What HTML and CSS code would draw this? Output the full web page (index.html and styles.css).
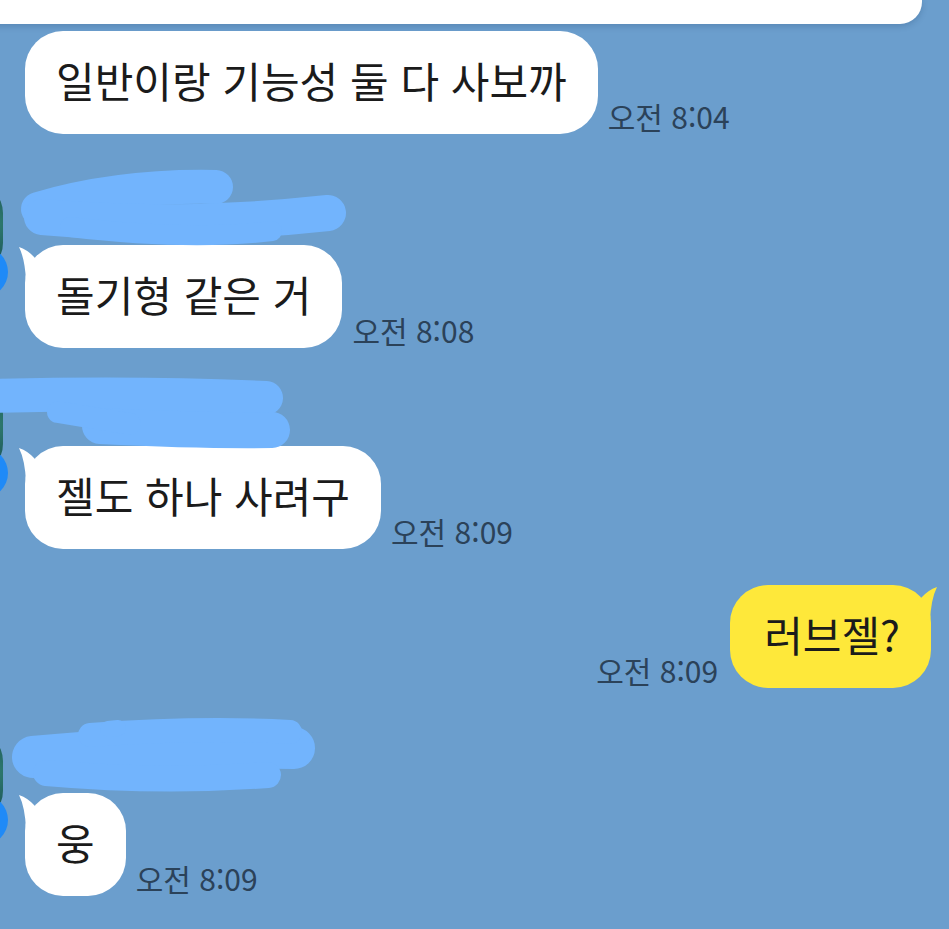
FILE: index.html
```html
<!DOCTYPE html>
<html lang="ko">
<head>
<meta charset="utf-8">
<title>채팅</title>
<link rel="stylesheet" href="styles.css">
</head>
<body>
<div class="chat">
  <div class="top-bubble"></div>

  <div class="row row-first">
    <div class="bubble">일반이랑 기능성 둘 다 사보까</div>
    <span class="time">오전 8:04</span>
  </div>

  <div class="group group-a">
    <div class="avatar"><span class="badge"></span></div>
    <div class="col">
      <div class="name"></div>
      <div class="row">
        <div class="bubble">
          <svg class="tail" viewBox="-7 0 30 40" width="30" height="40"><path d="M-6 2 Q3 5 10 13 L16 28 L1 36 Q0 14 -6 2 Z"/></svg>
          돌기형 같은 거
        </div>
        <span class="time">오전 8:08</span>
      </div>
    </div>
    <svg class="scribble" viewBox="0 0 360 90" width="360" height="90">
      <path d="M38 36 Q120 12 216 14" stroke-width="34"/>
      <path d="M42 44 Q180 56 328 40" stroke-width="36"/>
      <path d="M70 54 Q190 68 272 58" stroke-width="20"/>
    </svg>
  </div>

  <div class="group group-b">
    <div class="avatar"><span class="badge"></span></div>
    <div class="col">
      <div class="name"></div>
      <div class="row">
        <div class="bubble">
          <svg class="tail" viewBox="-7 0 30 40" width="30" height="40"><path d="M-6 2 Q3 5 10 13 L16 28 L1 36 Q0 14 -6 2 Z"/></svg>
          젤도 하나 사려구
        </div>
        <span class="time">오전 8:09</span>
      </div>
    </div>
    <svg class="scribble" viewBox="0 0 360 90" width="360" height="90">
      <path d="M-10 22 Q140 18 266 24" stroke-width="34"/>
      <path d="M100 52 Q200 57 272 56" stroke-width="36"/>
      <path d="M58 38 L130 50" stroke-width="22"/>
    </svg>
  </div>

  <div class="row row-sent">
    <span class="time">오전 8:09</span>
    <div class="bubble bubble-me">
      <svg class="tail tail-right" viewBox="-7 0 30 40" width="30" height="40"><path d="M-6 2 Q3 5 10 13 L16 28 L1 36 Q0 14 -6 2 Z"/></svg>
      러브젤?
    </div>
  </div>

  <div class="group group-c">
    <div class="avatar"><span class="badge"></span></div>
    <div class="col">
      <div class="name"></div>
      <div class="row">
        <div class="bubble">
          <svg class="tail" viewBox="-7 0 30 40" width="30" height="40"><path d="M-6 2 Q3 5 10 13 L16 28 L1 36 Q0 14 -6 2 Z"/></svg>
          웅
        </div>
        <span class="time">오전 8:09</span>
      </div>
    </div>
    <svg class="scribble" viewBox="0 0 360 90" width="360" height="90">
      <path d="M33 36 Q150 24 294 27" stroke-width="42"/>
      <path d="M90 14 Q200 6 290 11" stroke-width="24"/>
      <path d="M46 52 Q160 62 268 54" stroke-width="26"/>
      <path d="M108 8 L118 7" stroke-width="16"/>
    </svg>
  </div>
</div>
</body>
</html>
```

FILE: styles.css
```css
html, body {
  margin: 0;
  padding: 0;
  background: #6b9ecd;
}

body {
  font-family: "Noto Sans CJK KR", "Noto Sans", sans-serif;
  overflow: hidden;
}

.chat {
  display: flex;
  flex-direction: column;
  width: 949px;
  height: 929px;
}

.top-bubble {
  width: 952px;
  height: 24px;
  margin-left: -30px;
  background: #ffffff;
  border-bottom-right-radius: 22px;
  border-bottom-left-radius: 22px;
  box-shadow: 0 2px 6px rgba(20, 50, 90, 0.22);
  flex: none;
}

.row {
  display: flex;
  align-items: flex-end;
  gap: 10px;
}

.row-first {
  margin-top: 7px;
  padding-left: 25px;
}

.row-sent {
  justify-content: flex-end;
  padding-right: 18px;
  margin-top: 36px;
  gap: 12px;
}

.bubble {
  position: relative;
  background: #ffffff;
  color: #1b1b1b;
  font-size: 42px;
  line-height: 55px;
  height: 103px;
  box-sizing: border-box;
  padding: 21px 31px 27px;
  border-radius: 38px;
  white-space: nowrap;
}

.bubble-me {
  background: #fee83a;
  padding-left: 34px;
}

.tail {
  position: absolute;
  left: -7px;
  top: 0;
  fill: #ffffff;
  overflow: visible;
}

.tail-right {
  left: auto;
  right: -7px;
  transform: scaleX(-1);
  fill: #fee83a;
}

.time {
  font-size: 30px;
  line-height: 30px;
  color: #2b4259;
  margin-bottom: 3px;
  white-space: nowrap;
}

.group {
  position: relative;
  display: flex;
  gap: 22px;
}

.group-a { margin-top: 49px; }
.group-b { margin-top: 36px; }
.group-c { margin-top: 43px; }

.avatar {
  position: relative;
  flex: none;
  width: 90px;
  height: 90px;
  margin-left: -87px;
  border-radius: 30px;
  background: radial-gradient(circle at 90% 45%, #2f7d70 0%, #1c5356 45%, #143a40 100%);
}

.badge {
  position: absolute;
  left: 45px;
  top: 64px;
  width: 50px;
  height: 50px;
  border-radius: 50%;
  background: #1f8af7;
}

.col {
  display: flex;
  flex-direction: column;
}

.name {
  height: 62px;
}

.scribble {
  position: absolute;
  left: 0;
  top: -10px;
  overflow: visible;
}

.scribble path {
  fill: none;
  stroke: #72b4fd;
  stroke-linecap: round;
  stroke-linejoin: round;
}
```
